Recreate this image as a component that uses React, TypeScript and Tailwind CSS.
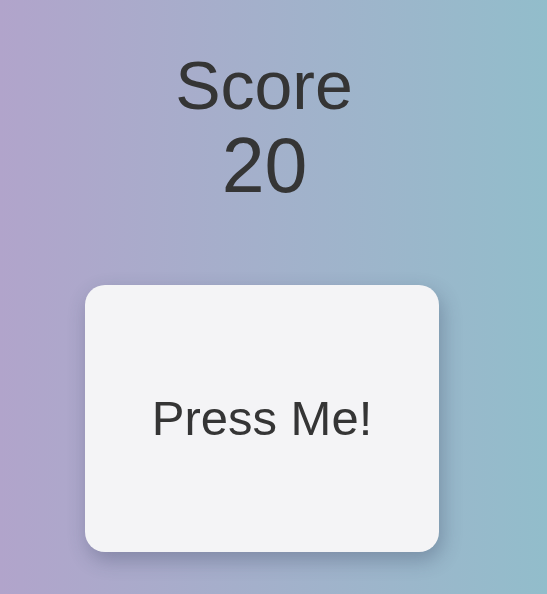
import { useState } from "react";

export default function App() {
  const [score, setScore] = useState(20);

  return (
    <div
      className="min-h-screen w-full h-[594px] bg-gradient-to-r from-[#b1a4cb] to-[#92bdcb] overflow-hidden"
      style={{ fontFamily: '"Liberation Sans", Arial, sans-serif' }}
    >
      <div className="ml-[85px] w-[354px] flex flex-col items-center pt-[51px]">
        <h1 className="text-[68px] leading-none text-[#353535] font-normal pl-[4px]">Score</h1>
        <div className="mt-[8px] text-[77px] leading-none text-[#353535] pl-[5px]">{score}</div>

        <button
          onClick={() => setScore(score + 1)}
          className="mt-[81px] w-[354px] h-[267px] rounded-[20px] bg-[#f4f4f6] shadow-[3px_8px_20px_rgba(40,50,80,0.3)] flex items-center justify-center"
        >
          <span className="text-[49px] leading-none text-[#353535]">Press Me!</span>
        </button>
      </div>
    </div>
  );
}
